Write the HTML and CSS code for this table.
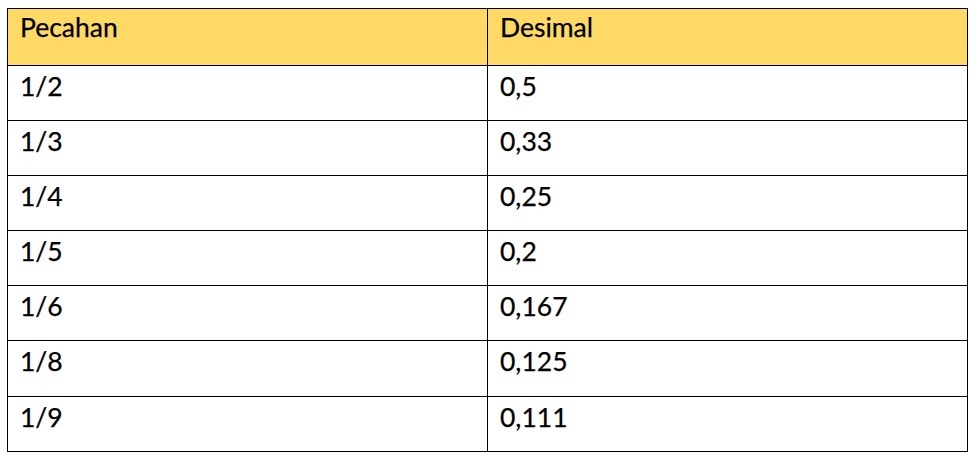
FILE: index.html
```html
<!DOCTYPE html>
<html lang="id">
<head>
<meta charset="utf-8">
<title>Pecahan dan Desimal</title>
<link rel="stylesheet" href="styles.css">
</head>
<body>
<table class="conv">
  <thead>
    <tr class="head"><th>Pecahan</th><th>Desimal</th></tr>
  </thead>
  <tbody>
    <tr><td>1/2</td><td>0,5</td></tr>
    <tr><td>1/3</td><td>0,33</td></tr>
    <tr><td>1/4</td><td>0,25</td></tr>
    <tr><td>1/5</td><td>0,2</td></tr>
    <tr><td>1/6</td><td>0,167</td></tr>
    <tr><td>1/8</td><td>0,125</td></tr>
    <tr><td>1/9</td><td>0,111</td></tr>
  </tbody>
</table>
</body>
</html>
```
FILE: styles.css
```css
html, body {
  margin: 0;
  padding: 0;
  background: #ffffff;
}
body {
  padding: 8px 0 0 7px;
  font-family: Lato, "Open Sans", sans-serif;
  color: #000;
}
.conv {
  border-collapse: collapse;
  width: 961px;
  table-layout: fixed;
}
.conv th, .conv td {
  border: 1.5px solid #000;
  text-align: left;
  vertical-align: top;
  font-weight: 400;
  font-size: 26.5px;
  line-height: 30px;
  padding: 5px 12px 0 12px;
  box-sizing: border-box;
  -webkit-text-stroke: 0.25px #000;
}
.conv th {
  height: 56.5px;
  padding-top: 3px;
}
.conv td {
  height: 55.2px;
}
.head {
  background: #ffd966;
}
```
